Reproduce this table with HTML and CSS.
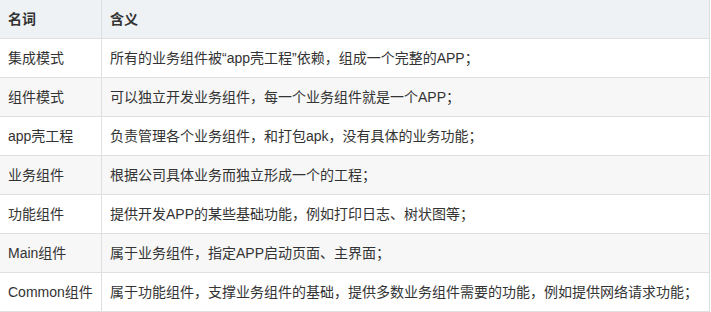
FILE: index.html
```html
<!DOCTYPE html>
<html>
<head>
<meta charset="utf-8">
<link rel="stylesheet" href="styles.css">
</head>
<body>
<table class="terms">
  <thead>
    <tr><th class="c1">名词</th><th>含义</th></tr>
  </thead>
  <tbody>
    <tr><td class="c1">集成模式</td><td>所有的业务组件被“app壳工程”依赖，组成一个完整的APP；</td></tr>
    <tr><td class="c1">组件模式</td><td>可以独立开发业务组件，每一个业务组件就是一个APP；</td></tr>
    <tr><td class="c1">app壳工程</td><td>负责管理各个业务组件，和打包apk，没有具体的业务功能；</td></tr>
    <tr><td class="c1">业务组件</td><td>根据公司具体业务而独立形成一个的工程；</td></tr>
    <tr><td class="c1">功能组件</td><td>提供开发APP的某些基础功能，例如打印日志、树状图等；</td></tr>
    <tr><td class="c1">Main组件</td><td>属于业务组件，指定APP启动页面、主界面；</td></tr>
    <tr><td class="c1">Common组件</td><td>属于功能组件，支撑业务组件的基础，提供多数业务组件需要的功能，例如提供网络请求功能；</td></tr>
  </tbody>
</table>
</body>
</html>
```
FILE: styles.css
```css
html, body {
  margin: 0;
  padding: 0;
  background: #fff;
}
body {
  font-family: "Liberation Sans", "Noto Sans CJK SC", sans-serif;
  font-size: 14px;
  color: #333;
  overflow: hidden;
}
.terms {
  border-collapse: collapse;
  width: 711px;
  margin: -1px 0 0 -1px;
  table-layout: fixed;
}
.terms th, .terms td {
  border: 1px solid #dfdfdf;
  height: 39px;
  padding: 0 8px;
  text-align: left;
  vertical-align: middle;
  white-space: nowrap;
  box-sizing: border-box;
  line-height: 20px;
}
.terms .c1 {
  width: 102px;
}
.terms th {
  background: #eef2f5;
  font-weight: bold;
}
.terms tbody tr:nth-child(even) td {
  background: #f7f7f7;
}
```
